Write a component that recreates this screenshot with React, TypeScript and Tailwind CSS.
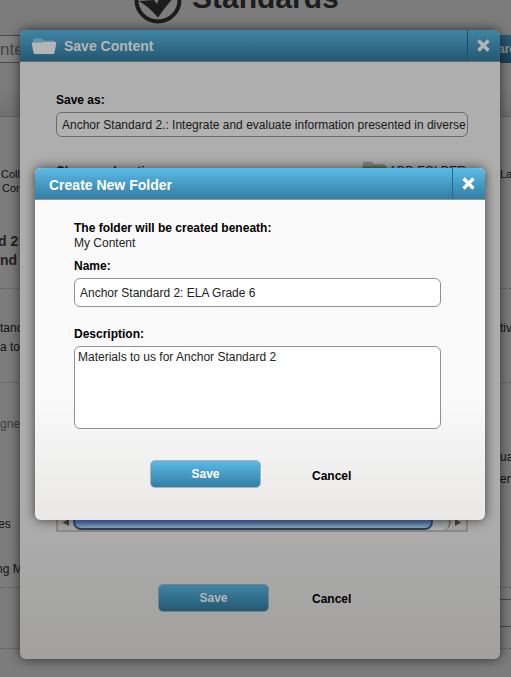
import type { ReactNode } from "react";

const rows = [
  { left: "Coll", right: "La", box: "h-[50px] items-end", text: "text-[11px] leading-[14px] text-[#111] pl-px" },
  { left: "Cor", right: "", box: "h-[14px] items-end", text: "text-[11px] leading-[14px] text-[#111] pl-0.5" },
  { left: "d 2", right: "", box: "h-[56px] items-end", text: "-indent-0.5 text-sm font-bold leading-5 text-[#222]" },
  { left: "nd t", right: "", box: "h-[19px] items-end", text: "text-sm font-bold leading-5 text-[#222]" },
  { left: "", right: "", box: "h-[19px] border-b", text: "text-xs" },
  { left: "tand", right: "tiv", box: "h-[47px] items-end", text: "text-xs leading-4 text-[#111]" },
  { left: "a to", right: "", box: "h-[19px] items-end", text: "text-xs leading-4 text-[#111]" },
  { left: "", right: "", box: "h-[28px] border-b", text: "text-xs" },
  { left: "gned", right: "", box: "h-[49px] items-end", text: "text-xs leading-4 text-[#3c3c3c]" },
  { left: "", right: "ua", box: "h-[33px] items-end", text: "text-xs leading-4 text-[#111]" },
  { left: "", right: "er", box: "h-[22px] items-end", text: "text-xs leading-4 text-[#111]" },
  { left: "es", right: "", box: "h-[45px] items-end", text: "-indent-0.5 text-xs leading-4 text-[#111]" },
  { left: "ng M", right: "", box: "h-[45px] items-end", text: "-indent-1 text-xs leading-4 text-[#111]" },
  { left: "", right: "", box: "h-[11px] border-b", text: "text-xs" },
];

function CloseIcon() {
  return (
    <svg width="13" height="13" viewBox="0 0 13 13" fill="none" stroke="currentColor" strokeWidth="3.4">
      <path d="M1.500 1.500l10 10M11.500 1.500l-10 10" />
    </svg>
  );
}

function FolderIcon() {
  return (
    <svg width="26" height="16" viewBox="0 0 26 16">
      <path d="M2 6V2q0-1.500 1.500-1.500h8l1.500 2h9.500q1.500 0 1.500 1.500v2z" fill="#6593a8" />
      <path d="M1.500 4.500h9.500l1.500 -.5h12q1 0 .8 1L23.500 14.500q-.3 1.500-1.500 1.500H4q-1.200 0-1.500-1.500L.7 5.500q-.2-1 .8-1z" fill="#b5b5b5" />
    </svg>
  );
}

function AddFolderIcon() {
  return (
    <svg width="25" height="20" viewBox="0 0 25 20">
      <path d="M1 6V2q0-1.500 1.500-1.500h6.500q1.500 0 2 1.500l.7 1h10q1.500 0 1.500 1.500v1.500z" fill="#878787" />
      <path d="M1 5h23.500l.5 2-2 12H2L0 7z" fill="#607f3d" />
    </svg>
  );
}

function Field({ id, label, children }: { id: string; label: string; children: ReactNode }) {
  return (
    <div className="flex flex-col gap-1">
      <label htmlFor={id} className="text-xs font-bold leading-[15px]">
        {label}
      </label>
      {children}
    </div>
  );
}

function Background() {
  return (
    <div className="min-h-screen bg-[#7c7c7c]">
      <header className="flex h-6 items-end gap-2.5 overflow-hidden pl-[134px]">
        <svg width="48" height="24" viewBox="0 0 48 24">
          <circle cx="24" cy="0" r="21.500" fill="none" stroke="#1c1c1c" strokeWidth="4" />
          <path d="M5 1Q16 8 24 17.500Q31 7 41-4H26L23 4L20 0z" fill="#1c1c1c" />
        </svg>
        <h1 className="mb-2 text-3xl font-bold leading-9 text-[#1c1c1c]">Standards</h1>
      </header>
      <form className="mt-[11px] flex h-7">
        <input
          aria-label="Search"
          defaultValue="nte"
          className="min-w-0 flex-1 border-y border-[#484848] bg-[#828282] pt-0.5 text-[17px] text-[#454545]"
        />
        <button type="button" className="w-[13px] bg-linear-to-b from-[#2d5d75] to-[#18415a] text-xs font-bold text-[#959595]">
          arc
        </button>
      </form>
      <div className="h-[54px] border-b border-[#626262] bg-linear-to-b from-[#7c7c7c] via-[#7c7c7c] to-[#707070]" />
      <main className="pt-[14px]">
        {rows.map((row, index) => (
          <div key={index} className={`flex justify-between border-dotted border-[#5a5a5a] ${row.box} ${row.text}`}>
            <span className="w-8 whitespace-nowrap">{row.left}</span>
            <span className="w-[11px] whitespace-nowrap">{row.right}</span>
          </div>
        ))}
        <div className="ml-auto mt-[11px] h-7 w-8 border-y border-[#484848]" />
        <div className="h-[22px] border-b border-dotted border-[#5a5a5a]" />
      </main>
    </div>
  );
}

function ListScrollbar() {
  return (
    <div className="flex h-[18px] items-stretch border-b-2 border-[#8a8a8a] bg-[#a9a9a9]">
      <svg className="h-4 w-[15px]" viewBox="0 0 15 16">
        <path d="M11 5v7L4.500 8.500z" fill="#444" />
      </svg>
      <div className="flex flex-1 rounded-full border-r-2 border-[#777] bg-linear-to-b from-[#8e8e8e] to-[#b3b3b3]">
        <div className="mr-4 flex-1 rounded-full border-2 border-t border-[#29487f] border-b-[#33404f] bg-linear-to-b from-[#6787b7] via-[#4e76b3] to-[#83a9b8]" />
      </div>
      <svg className="h-4 w-[15px]" viewBox="0 0 15 16">
        <path d="M4 5v7l6-3.500z" fill="#444" />
      </svg>
    </div>
  );
}

function NewFolderDialog() {
  return (
    <section
      role="dialog"
      aria-label="Create New Folder"
      className="absolute inset-x-[15px] top-[138px] overflow-hidden rounded-md bg-linear-to-b from-[#fafafa] from-65% to-[#e9e8e7] text-black shadow-[0_0_12px_rgba(0,0,0,0.65)]"
    >
      <header className="flex h-8 border-b border-[#8c9499] bg-linear-to-b from-[#5bbbe6] to-[#337ea4] text-white">
        <h2 className="flex flex-1 items-center pl-[14px] pt-0.5 text-sm font-bold">Create New Folder</h2>
        <button type="button" aria-label="Close" className="flex w-[33px] items-center justify-center border-l border-[#25688b] pr-0.5">
          <CloseIcon />
        </button>
      </header>
      <div className="pb-8 pl-[39px] pr-11 pt-[21px] text-xs leading-[15px]">
        <p className="font-bold">The folder will be created beneath:</p>
        <p className="mb-2 text-[#222]">My Content</p>
        <div className="flex flex-col gap-5">
          <Field id="folder-name" label="Name:">
            <input
              id="folder-name"
              defaultValue="Anchor Standard 2: ELA Grade 6"
              className="h-[29px] rounded-md border border-[#909090] bg-white px-[5px] text-xs text-[#222]"
            />
          </Field>
          <Field id="folder-description" label="Description:">
            <textarea
              id="folder-description"
              defaultValue="Materials to us for Anchor Standard 2"
              className="h-[83px] resize-none rounded-md border border-[#909090] bg-white px-[3px] py-[3px] text-xs leading-[15px] text-[#222]"
            />
          </Field>
        </div>
        <div className="mt-[31px] flex items-center gap-[51px] pl-[76px]">
          <button type="button" className="h-7 w-[111px] rounded-[5px] border border-[#a9b4ba] bg-linear-to-b from-[#5bbbe6] to-[#337ea4] text-xs font-bold text-white">
            Save
          </button>
          <button type="button" className="pt-1 text-xs font-bold">Cancel</button>
        </div>
      </div>
    </section>
  );
}

function SaveContentDialog() {
  return (
    <section
      role="dialog"
      aria-label="Save Content"
      className="absolute left-5 right-[11px] top-[30px] rounded-md bg-linear-to-b from-[#aeaeae] from-75% to-[#a2a1a0] text-black shadow-[0_0_12px_rgba(0,0,0,0.65)]"
    >
      <header className="flex h-8 rounded-t-md border-b border-[#666c70] bg-linear-to-b from-[#4085a4] to-[#245973] text-[#b5b5b5]">
        <div className="flex flex-1 items-center gap-[7px] pl-[11px]">
          <FolderIcon />
          <h2 className="text-sm font-bold">Save Content</h2>
        </div>
        <button type="button" aria-label="Close" className="flex w-[33px] items-center justify-center border-l border-[#1c4d66] pr-0.5">
          <CloseIcon />
        </button>
      </header>
      <div className="pb-[47px] pl-9 pr-8 pt-[31px] text-xs leading-[15px]">
        <Field id="save-as" label="Save as:">
          <input
            id="save-as"
            defaultValue="Anchor Standard 2.: Integrate and evaluate information presented in diverse"
            className="h-[25px] rounded-md border border-[#6a6a6a] bg-[#b1b1b1] pl-[5px] text-xs text-[#181818]"
          />
        </Field>
        <div className="mt-6 flex h-4 items-center justify-between pt-1">
          <p className="font-bold text-[#181818]">Choose a location:</p>
          <button type="button" className="flex items-center gap-0.5 pr-0.5 text-[#222]">
            <AddFolderIcon />
            ADD FOLDER
          </button>
        </div>
        <div className="flex h-[355px] flex-col justify-end border-x-2 border-[#8a8a8a]">
          <ListScrollbar />
        </div>
        <div className="mt-[52px] flex items-center gap-[43px] pl-[102px]">
          <button type="button" className="h-7 w-[111px] rounded-[5px] border border-[#777f84] bg-linear-to-b from-[#4085a4] to-[#245973] text-xs font-bold text-[#b5b5b5]">
            Save
          </button>
          <button type="button" className="pt-0.5 text-xs font-bold">Cancel</button>
        </div>
      </div>
      <NewFolderDialog />
    </section>
  );
}

export default function App() {
  return (
    <div className="relative overflow-hidden font-['Liberation_Sans',Arial,sans-serif]">
      <Background />
      <SaveContentDialog />
    </div>
  );
}
